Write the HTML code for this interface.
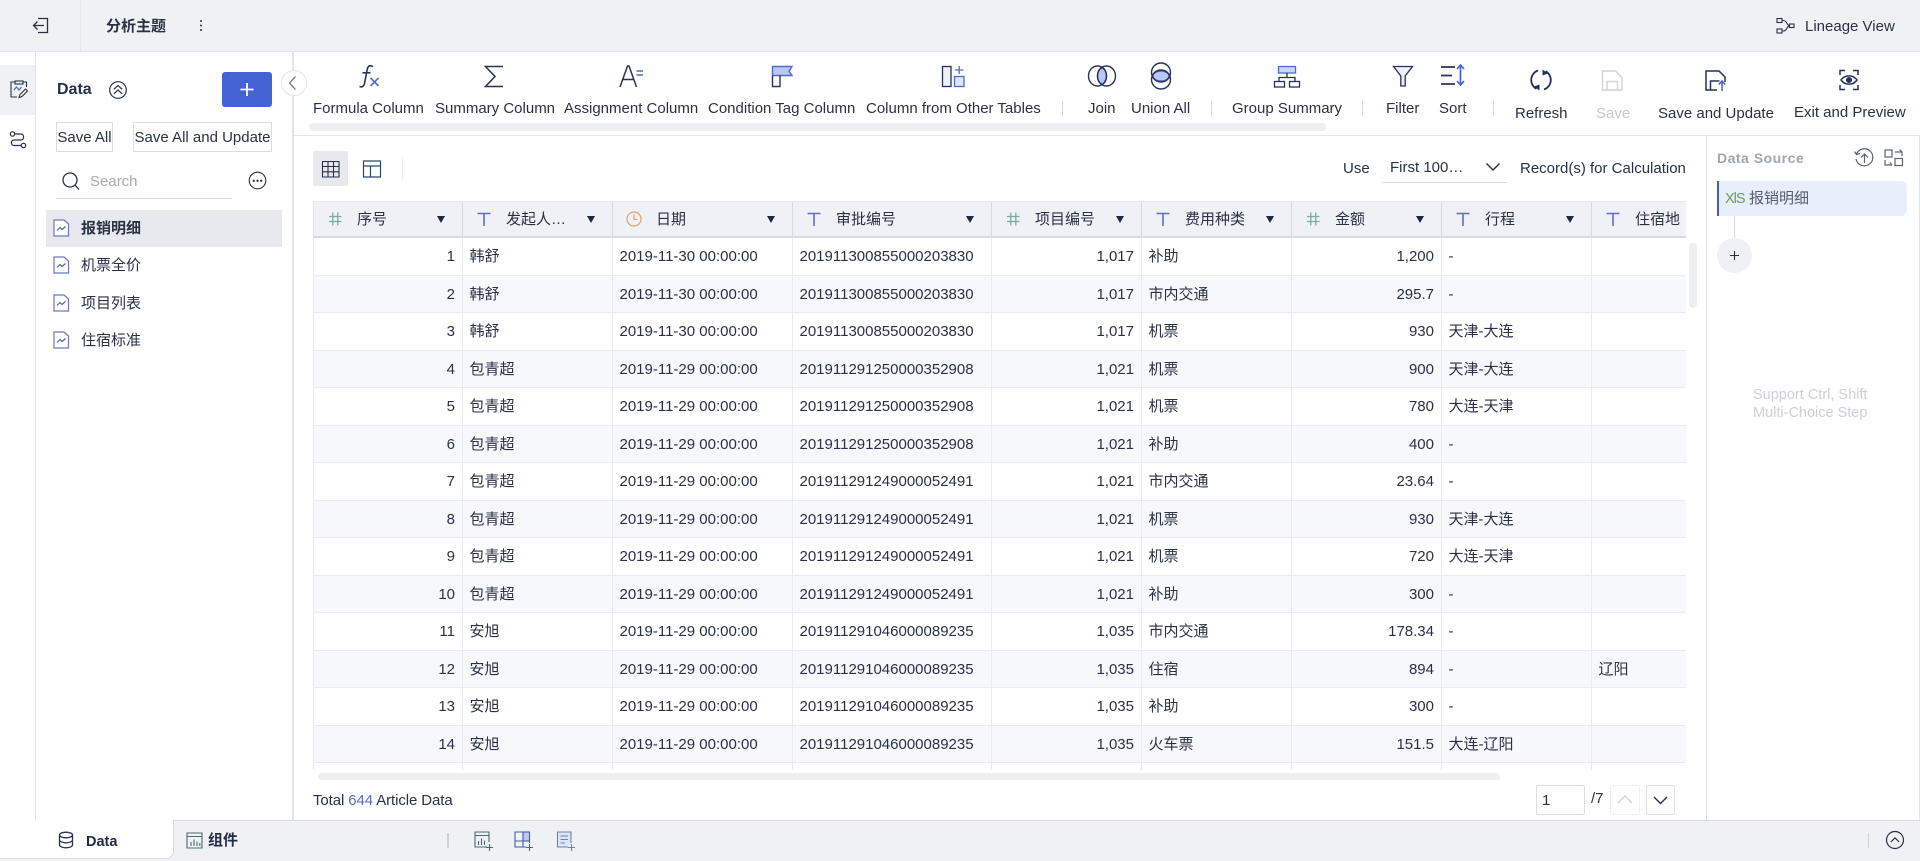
<!DOCTYPE html>
<html lang="zh">
<head>
<meta charset="utf-8">
<title>分析主题</title>
<style>
html,body{margin:0;padding:0;width:1920px;height:861px;overflow:hidden;background:#fff}
body{position:relative;font:15px/20px "Liberation Sans","Noto Sans CJK SC",sans-serif;color:#2a3144}
.a{position:absolute;white-space:nowrap}
svg{position:absolute;overflow:visible;fill:none}
.l{position:absolute;background:#e3e5ea}
.tl{position:absolute;top:99px;white-space:nowrap;line-height:20px}
.tb{position:absolute;left:313px;top:201px;width:1373px;height:569px;overflow:hidden}
.r{position:absolute;left:0;width:1373px;height:37.5px;display:flex;box-sizing:border-box;border-bottom:1.5px solid #e9ebf0}
.r.e{background:#f7f8fc}
.r>div{box-sizing:border-box;height:100%;border-right:1px solid #e9ebf0;padding:0 7px 0 6.5px;line-height:38px;white-space:nowrap;overflow:hidden;flex:none}
.r>div:nth-child(1){width:150px;border-left:1px solid #e9ebf0;text-align:right}
.r>div:nth-child(2){width:150px}
.r>div:nth-child(3){width:180px}
.r>div:nth-child(4){width:199px}
.r>div:nth-child(5){width:150px;text-align:right}
.r>div:nth-child(6){width:150px}
.r>div:nth-child(7){width:150px;text-align:right}
.r>div:nth-child(8){width:150px}
.r>div:nth-child(9){width:95px;border-right:0}
.h{position:absolute;left:0;top:0;width:1373px;height:37px;background:#eff1f7;border-top:1px solid #e6e8ee;border-bottom:2px solid #d7dae2;box-sizing:border-box}
.hc{position:absolute;top:0;height:100%;line-height:35px;border-right:1px solid #d7dae2;box-sizing:border-box}
.hc span{position:absolute;left:43px;top:0;white-space:nowrap}
.hc i{position:absolute;top:14px;right:17px;width:0;height:0;border-left:4.5px solid transparent;border-right:4.5px solid transparent;border-top:7px solid #1c2645}
.hc svg{left:13px;top:9px}
</style>
</head>
<body>

<!-- top bar -->
<div class="a" style="left:0;top:0;width:1920px;height:52px;background:#eff1f5;border-bottom:1px solid #e3e5ea;box-sizing:border-box"></div>
<div class="l" style="left:80px;top:0;width:1px;height:51px"></div>
<svg style="left:0;top:0" width="60" height="52" stroke="#2a3144" stroke-width="1.3"><path d="M38 18.5H47.5V32.5H38"/><path d="M44 25.5H33.5M37.5 21.5L33.5 25.5L37.5 29.5"/></svg>
<div class="a" style="left:106px;top:17px;font-weight:700;color:#2a3144">分析主题</div>
<svg style="left:0;top:0" width="220" height="52"><circle cx="201" cy="21" r="1" fill="#2a3144"/><circle cx="201" cy="25.5" r="1" fill="#2a3144"/><circle cx="201" cy="30" r="1" fill="#2a3144"/></svg>
<svg style="left:1770px;top:10px" width="34" height="30" stroke="#2a3144" stroke-width="1.1"><rect x="7" y="8.500" width="5" height="4"/><rect x="7" y="19" width="5" height="4"/><rect x="19.500" y="14" width="4.500" height="3.500"/><path d="M12 10.500H13.500C17 10.500 17 15.800 19.500 15.800C17 15.800 17 21 13.500 21H12"/></svg>
<div class="a" style="left:1805px;top:17px">Lineage View</div>

<!-- left rail -->
<div class="a" style="left:0;top:65px;width:35px;height:50px;background:#eff1f5"></div>
<div class="l" style="left:35px;top:52px;width:1px;height:768px"></div>
<svg style="left:8px;top:79px" width="22" height="22" stroke="#2a3144" stroke-width="1.1"><path d="M7 3H3V18H9M15 3H18.500V8"/><rect x="7" y="2" width="8" height="3"/><path d="M6 11L8.500 8L11 11L13.500 8" stroke="#4463c7"/><path d="M11 18.500L12 15.500L17.500 10L19.500 12L14 17.500Z"/></svg>
<svg style="left:8px;top:129px" width="22" height="22" stroke="#2a3144" stroke-width="1.2"><circle cx="4.500" cy="5" r="2.200"/><circle cx="15.500" cy="16.500" r="2.200"/><path d="M7 5H13C16.500 5 16.500 11 13 11H6C2.500 11 2.500 16.500 6 16.500H13"/></svg>

<!-- data panel -->
<div class="l" style="left:292px;top:52px;width:1.500px;height:768px"></div>
<div class="a" style="left:57px;top:80px;font-size:16px;font-weight:700;color:#24304f">Data</div>
<svg style="left:108px;top:80px" width="20" height="20" stroke="#2a3144" stroke-width="1.2"><circle cx="10" cy="10" r="8.300"/><path d="M5.800 9.300L10 5.500L14.200 9.300M5.800 13.800L10 10L14.200 13.800"/></svg>
<div class="a" style="left:222px;top:72px;width:50px;height:35px;background:#4462d2;border-radius:3px"></div>
<svg style="left:222px;top:72px" width="50" height="35" stroke="#fff" stroke-width="1.800"><path d="M25 11V24M18.500 17.500H31.500"/></svg>
<div class="a" style="left:281px;top:70px;width:26px;height:26px;border-radius:50%;background:#fff;border:1px solid #e3e5ea;box-sizing:border-box"></div>
<svg style="left:281px;top:70px" width="26" height="26" stroke="#666c78" stroke-width="1.200"><path d="M14.500 6.500L8.500 13L14.500 19.500"/></svg>
<div class="a" style="left:56px;top:122px;width:57px;height:30px;border:1px solid #dcdde1;box-sizing:border-box;text-align:center;line-height:30px;overflow:hidden">Save All</div>
<div class="a" style="left:133px;top:122px;width:139px;height:30px;border:1px solid #dcdde1;box-sizing:border-box;text-align:center;line-height:30px;overflow:hidden">Save All and Update</div>
<svg style="left:60px;top:170px" width="22" height="22" stroke="#2a3144" stroke-width="1.300"><circle cx="10" cy="10" r="7"/><path d="M15 15L19 19.500"/></svg>
<div class="a" style="left:90px;top:172px;color:#a8abb3">Search</div>
<div class="l" style="left:56px;top:198px;width:176px;height:1px;background:#dcdde3"></div>
<svg style="left:248px;top:171px" width="20" height="20" stroke="#2a3144" stroke-width="1.100"><circle cx="9.500" cy="9.500" r="8.300"/><circle cx="5.800" cy="9.800" r=".6" fill="#2a3144"/><circle cx="9.500" cy="9.800" r=".6" fill="#2a3144"/><circle cx="13.200" cy="9.800" r=".6" fill="#2a3144"/></svg>

<div class="a" style="left:46px;top:210px;width:236px;height:37px;background:#e8e9ee"></div>
<svg style="left:53px;top:219px" width="17" height="18" stroke="#6f75c4" stroke-width="1.200"><path d="M1 1H11L15.500 5V17H1Z" fill="#fff"/><path d="M4 11.500L7 8.500L9 10.500L12.500 7.500" stroke="#4d6a90"/></svg>
<div class="a" style="left:81px;top:219px;font-weight:700;color:#2a3144">报销明细</div>
<svg style="left:53px;top:256px" width="17" height="18" stroke="#6f75c4" stroke-width="1.200"><path d="M1 1H11L15.500 5V17H1Z"/><path d="M4 11.500L7 8.500L9 10.500L12.500 7.500" stroke="#4d6a90"/></svg>
<div class="a" style="left:81px;top:256px">机票全价</div>
<svg style="left:53px;top:294px" width="17" height="18" stroke="#6f75c4" stroke-width="1.200"><path d="M1 1H11L15.500 5V17H1Z"/><path d="M4 11.500L7 8.500L9 10.500L12.500 7.500" stroke="#4d6a90"/></svg>
<div class="a" style="left:81px;top:294px">项目列表</div>
<svg style="left:53px;top:331px" width="17" height="18" stroke="#6f75c4" stroke-width="1.200"><path d="M1 1H11L15.500 5V17H1Z"/><path d="M4 11.500L7 8.500L9 10.500L12.500 7.500" stroke="#4d6a90"/></svg>
<div class="a" style="left:81px;top:331px">住宿标准</div>
<svg style="left:285px;top:425px" width="14" height="21" fill="#555c68"><rect x="2" y="2.500" width="2" height="2"/><rect x="10" y="2.500" width="2" height="2"/><rect x="2" y="9" width="2" height="2"/><rect x="10" y="9" width="2" height="2"/><rect x="2" y="16" width="2" height="2"/><rect x="10" y="16" width="2" height="2"/></svg>

<!-- toolbar -->
<div class="l" style="left:293px;top:135px;width:1627px;height:1px"></div>
<div class="a" style="left:309px;top:123px;width:1017px;height:8px;background:#eeeff1;border-radius:4px"></div>

<svg style="left:357px;top:64px" width="24" height="24" stroke="#27315a" stroke-width="1.600"><path d="M16 2.600C12.800 .8 11 1.800 10.200 5.500L7.600 19C7 22.500 5 23.400 2.500 22.500"/><path d="M5.500 8.800H13.500"/><path d="M13.500 14L21.500 22M21.500 14L13.500 22" stroke="#4f6cc9"/></svg>
<svg style="left:482px;top:64px" width="24" height="24" stroke="#27315a" stroke-width="1.500"><path d="M21 2.500H3.500L13 12.500L3.500 22.500H21"/></svg>
<svg style="left:619px;top:64px" width="26" height="24" stroke="#27315a" stroke-width="1.500"><path d="M1 23L8.500 2H10L17.500 23M4 15.500H14.500"/><path d="M17.500 7H24M17.500 11H24" stroke="#4f6cc9"/></svg>
<svg style="left:770px;top:64px" width="24" height="24" stroke-width="1.400"><path d="M2.500 2.500H22L19 7.200L22 11.500H2.500Z" fill="#b9c9f6" stroke="#4f6cc9"/><path d="M2.500 11.500V22.500H10V11.500" stroke="#27315a"/></svg>
<svg style="left:941px;top:64px" width="26" height="24" stroke-width="1.300"><rect x="1.500" y="2.500" width="8.500" height="20" fill="#eef2fd" stroke="#27315a"/><rect x="13.500" y="12.500" width="9.500" height="10" fill="#dfe6fa" stroke="#4f6cc9"/><path d="M18.200 2V10M14 6H22.500" stroke="#4f6cc9"/></svg>
<svg style="left:1088px;top:62px" width="28" height="28" stroke="#27315a" stroke-width="1.400"><ellipse cx="14" cy="14" rx="4.500" ry="8" fill="#b9c9f6" stroke="#4f6cc9"/><ellipse cx="9.500" cy="14" rx="9" ry="10"/><ellipse cx="18.500" cy="14" rx="9" ry="10"/></svg>
<svg style="left:1147px;top:62px" width="28" height="28" stroke="#27315a" stroke-width="1.400"><ellipse cx="14" cy="14" rx="8" ry="5" fill="#b9c9f6" stroke="#4f6cc9"/><circle cx="14" cy="10.500" r="9.500"/><circle cx="14" cy="17.500" r="9.500"/></svg>
<svg style="left:1273px;top:64px" width="28" height="24" stroke="#4f6cc9" stroke-width="1.300"><rect x="5.500" y="2.500" width="17" height="6.500" fill="#c8d5f8"/><path d="M14 9V13.500M6 18V13.500H22V18" stroke="#27315a"/><rect x="1.500" y="17.500" width="10" height="5.500" stroke="#27315a"/><rect x="16.500" y="17.500" width="10" height="5.500" stroke="#27315a"/></svg>
<svg style="left:1391px;top:64px" width="24" height="24" stroke="#27315a" stroke-width="1.300"><path d="M2.500 2.500H21.500L14.200 12V22H9.800V12Z" fill="#eaeffc"/></svg>
<svg style="left:1439px;top:62px" width="30" height="26" stroke-width="1.700"><path d="M2 5H16M2 13.500H13M2 22H16" stroke="#27315a"/><path d="M21.500 3V23" stroke="#4463c7"/><path d="M18 7L21.500 3L25 7M18 19L21.500 23L25 19" stroke="#4463c7"/></svg>

<div class="tl" style="left:313px">Formula Column</div>
<div class="tl" style="left:435px">Summary Column</div>
<div class="tl" style="left:564px">Assignment Column</div>
<div class="tl" style="left:708px">Condition Tag Column</div>
<div class="tl" style="left:866px">Column from Other Tables</div>
<div class="l" style="left:1062px;top:101px;width:1px;height:15px;background:#d5d7dc"></div>
<div class="tl" style="left:1088px">Join</div>
<div class="tl" style="left:1131px">Union All</div>
<div class="l" style="left:1211px;top:101px;width:1px;height:15px;background:#d5d7dc"></div>
<div class="tl" style="left:1232px">Group Summary</div>
<div class="l" style="left:1362px;top:101px;width:1px;height:15px;background:#d5d7dc"></div>
<div class="tl" style="left:1386px">Filter</div>
<div class="tl" style="left:1439px">Sort</div>
<div class="l" style="left:1493px;top:101px;width:1px;height:15px;background:#d5d7dc"></div>

<svg style="left:1529px;top:68px" width="24" height="24" stroke="#27315a" stroke-width="1.800"><path d="M9 2.500A10 10 0 0 0 7.500 20.800"/><path d="M15 21.500A10 10 0 0 0 16.500 3.200"/><path d="M10.500 22.500L5 18.500L10.500 16.500Z" fill="#27315a" stroke="none"/><path d="M13.500 1.500L19 5.500L13.500 7.500Z" fill="#27315a" stroke="none"/></svg>
<div class="tl" style="left:1515px;top:104px">Refresh</div>
<svg style="left:1600px;top:68px" width="24" height="24" stroke="#d3d4d8" stroke-width="1.500"><path d="M2.500 3H15.500L22 9.500V22H2.500Z"/><rect x="7" y="13.500" width="10.500" height="8.500"/></svg>
<div class="tl" style="left:1596px;top:104px;color:#c6c8cc">Save</div>
<svg style="left:1703px;top:68px" width="26" height="24" stroke="#27315a" stroke-width="1.500"><path d="M14 22H3V3H16L22 9V14"/><path d="M7.500 22V13H16.500"/><path d="M19 23V13.500M15.800 16.500L19 13L22.200 16.500" stroke="#4463c7"/></svg>
<div class="tl" style="left:1658px;top:104px">Save and Update</div>
<svg style="left:1837px;top:68px" width="24" height="24" stroke="#27315a" stroke-width="1.500"><path d="M8 2.500H3V7M16 2.500H21V7M8 21.500H3V17M16 21.500H21V17"/><path d="M4 12C8 6.500 16 6.500 20 12C16 17.500 8 17.500 4 12Z"/><circle cx="12" cy="12" r="2.300" fill="#27315a"/></svg>
<div class="tl" style="left:1794px;top:103px">Exit and Preview</div>

<!-- table controls -->
<div class="a" style="left:313px;top:151px;width:35px;height:35px;background:#e8e9ee;border-radius:2px"></div>
<svg style="left:321px;top:159px" width="20" height="20" stroke="#2a3144" stroke-width="1.100"><path d="M1.500 2.500H18V18H1.500ZM1.500 7.500H18M1.500 12.800H18M7 2.500V18M12.500 2.500V18"/></svg>
<svg style="left:362px;top:159px" width="20" height="20" stroke="#2a4a6a" stroke-width="1.200"><path d="M1.500 2H18.500V18H1.500ZM1.500 7H18.500M8.500 7V18"/></svg>
<div class="l" style="left:402px;top:156px;width:1px;height:25px;background:#eceef1"></div>
<div class="a" style="left:1343px;top:159px">Use</div>
<div class="a" style="left:1390px;top:158px">First 100…</div>
<svg style="left:1484px;top:160px" width="18" height="14" stroke="#2a3144" stroke-width="1.400"><path d="M2.500 3.500L9 10L15.500 3.500"/></svg>
<div class="l" style="left:1382px;top:182px;width:125px;height:1px;background:#dcdde3"></div>
<div class="a" style="left:1520px;top:159px">Record(s) for Calculation</div>

<!-- table -->
<div class="tb">
<div class="r" style="top:37px"><div>1</div><div>韩舒</div><div>2019-11-30 00:00:00</div><div>201911300855000203830</div><div>1,017</div><div>补助</div><div>1,200</div><div>-</div><div></div></div>
<div class="r e" style="top:74.5px"><div>2</div><div>韩舒</div><div>2019-11-30 00:00:00</div><div>201911300855000203830</div><div>1,017</div><div>市内交通</div><div>295.7</div><div>-</div><div></div></div>
<div class="r" style="top:112px"><div>3</div><div>韩舒</div><div>2019-11-30 00:00:00</div><div>201911300855000203830</div><div>1,017</div><div>机票</div><div>930</div><div>天津-大连</div><div></div></div>
<div class="r e" style="top:149.5px"><div>4</div><div>包青超</div><div>2019-11-29 00:00:00</div><div>201911291250000352908</div><div>1,021</div><div>机票</div><div>900</div><div>天津-大连</div><div></div></div>
<div class="r" style="top:187px"><div>5</div><div>包青超</div><div>2019-11-29 00:00:00</div><div>201911291250000352908</div><div>1,021</div><div>机票</div><div>780</div><div>大连-天津</div><div></div></div>
<div class="r e" style="top:224.5px"><div>6</div><div>包青超</div><div>2019-11-29 00:00:00</div><div>201911291250000352908</div><div>1,021</div><div>补助</div><div>400</div><div>-</div><div></div></div>
<div class="r" style="top:262px"><div>7</div><div>包青超</div><div>2019-11-29 00:00:00</div><div>201911291249000052491</div><div>1,021</div><div>市内交通</div><div>23.64</div><div>-</div><div></div></div>
<div class="r e" style="top:299.5px"><div>8</div><div>包青超</div><div>2019-11-29 00:00:00</div><div>201911291249000052491</div><div>1,021</div><div>机票</div><div>930</div><div>天津-大连</div><div></div></div>
<div class="r" style="top:337px"><div>9</div><div>包青超</div><div>2019-11-29 00:00:00</div><div>201911291249000052491</div><div>1,021</div><div>机票</div><div>720</div><div>大连-天津</div><div></div></div>
<div class="r e" style="top:374.5px"><div>10</div><div>包青超</div><div>2019-11-29 00:00:00</div><div>201911291249000052491</div><div>1,021</div><div>补助</div><div>300</div><div>-</div><div></div></div>
<div class="r" style="top:412px"><div>11</div><div>安旭</div><div>2019-11-29 00:00:00</div><div>201911291046000089235</div><div>1,035</div><div>市内交通</div><div>178.34</div><div>-</div><div></div></div>
<div class="r e" style="top:449.5px"><div>12</div><div>安旭</div><div>2019-11-29 00:00:00</div><div>201911291046000089235</div><div>1,035</div><div>住宿</div><div>894</div><div>-</div><div>辽阳</div></div>
<div class="r" style="top:487px"><div>13</div><div>安旭</div><div>2019-11-29 00:00:00</div><div>201911291046000089235</div><div>1,035</div><div>补助</div><div>300</div><div>-</div><div></div></div>
<div class="r e" style="top:524.5px"><div>14</div><div>安旭</div><div>2019-11-29 00:00:00</div><div>201911291046000089235</div><div>1,035</div><div>火车票</div><div>151.5</div><div>大连-辽阳</div><div></div></div>
<div class="r" style="top:562px"><div></div><div></div><div></div><div></div><div></div><div></div><div></div><div></div><div></div></div>

<div class="h">
<div class="hc" style="left:0;width:150px;border-left:1px solid #e0e2e9"><svg width="16" height="16" stroke="#7cab9f" stroke-width="1.300"><path d="M2 5.500H14.500M2 10.500H14.500M5.800 1.500V14.500M10.800 1.500V14.500"/></svg><span>序号</span><i></i></div>
<div class="hc" style="left:150px;width:150px"><svg width="16" height="16" stroke="#5f6fc4" stroke-width="1.600"><path d="M1.500 2.500H14.500M8 2.500V15"/></svg><span>发起人…</span><i></i></div>
<div class="hc" style="left:300px;width:180px"><svg width="16" height="16" stroke="#e0a676" stroke-width="1.300"><circle cx="8" cy="8" r="7"/><path d="M8 3.500V8.500H11.500"/></svg><span>日期</span><i></i></div>
<div class="hc" style="left:480px;width:199px"><svg width="16" height="16" stroke="#5f6fc4" stroke-width="1.600"><path d="M1.500 2.500H14.500M8 2.500V15"/></svg><span>审批编号</span><i></i></div>
<div class="hc" style="left:679px;width:150px"><svg width="16" height="16" stroke="#7cab9f" stroke-width="1.300"><path d="M2 5.500H14.500M2 10.500H14.500M5.800 1.500V14.500M10.800 1.500V14.500"/></svg><span>项目编号</span><i></i></div>
<div class="hc" style="left:829px;width:150px"><svg width="16" height="16" stroke="#5f6fc4" stroke-width="1.600"><path d="M1.500 2.500H14.500M8 2.500V15"/></svg><span>费用种类</span><i></i></div>
<div class="hc" style="left:979px;width:150px"><svg width="16" height="16" stroke="#7cab9f" stroke-width="1.300"><path d="M2 5.500H14.500M2 10.500H14.500M5.800 1.500V14.500M10.800 1.500V14.500"/></svg><span>金额</span><i></i></div>
<div class="hc" style="left:1129px;width:150px"><svg width="16" height="16" stroke="#5f6fc4" stroke-width="1.600"><path d="M1.500 2.500H14.500M8 2.500V15"/></svg><span>行程</span><i></i></div>
<div class="hc" style="left:1279px;width:95px;border-right:0"><svg width="16" height="16" stroke="#5f6fc4" stroke-width="1.600"><path d="M1.500 2.500H14.500M8 2.500V15"/></svg><span>住宿地</span></div>
</div>
</div>

<!-- scrollbars -->
<div class="a" style="left:1689px;top:243px;width:8px;height:65px;background:#eeeff1;border-radius:4px"></div>
<div class="a" style="left:318px;top:773px;width:1182px;height:7px;background:#eeeff1;border-radius:4px"></div>

<!-- pagination -->
<div class="a" style="left:313px;top:791px;letter-spacing:-.1px">Total <span style="color:#5b6bbf">644</span> Article Data</div>
<div class="a" style="left:1536px;top:785px;width:49px;height:30px;border:1px solid #dfe0e3;border-radius:2px;box-sizing:border-box;line-height:29px;padding-left:5px">1</div>
<div class="a" style="left:1591px;top:789px">/7</div>
<div class="a" style="left:1610px;top:785px;width:30px;height:30px;border:1px solid #eff0f2;border-radius:2px;box-sizing:border-box"></div>
<svg style="left:1610px;top:785px" width="30" height="30" stroke="#d3d5d9" stroke-width="1.400"><path d="M8 18L15 11L22 18"/></svg>
<div class="a" style="left:1646px;top:785px;width:29px;height:30px;border:1px solid #dfe0e3;border-radius:2px;box-sizing:border-box"></div>
<svg style="left:1646px;top:785px" width="29" height="30" stroke="#2a3144" stroke-width="1.400"><path d="M8 12L14.500 18.500L21 12"/></svg>

<!-- right panel -->
<div class="l" style="left:1706px;top:136px;width:1px;height:684px;background:#e1e2e6"></div>
<div class="l" style="left:1919px;top:136px;width:1px;height:684px"></div>
<div class="a" style="left:1717px;top:148px;font-size:14px;font-weight:700;color:#a2a6b1;letter-spacing:.5px">Data Source</div>
<svg style="left:1853px;top:147px" width="22" height="22" stroke="#5b6472" stroke-width="1.200"><path d="M3.500 7A8.500 8.500 0 1 1 3 12"/><path d="M1.500 4.500L3.500 7.500L7 6.500"/><path d="M11.500 16V7M8 10.500L11.500 7L15 10.500"/></svg>
<svg style="left:1884px;top:148px" width="20" height="20" stroke="#5b6472" stroke-width="1.200"><rect x="1" y="2" width="7" height="7"/><rect x="11" y="10.500" width="7.500" height="7"/><path d="M11 4H18V8M15.500 1.500L18 4M1 12V17H8M6 14.500L8 17"/></svg>

<div class="a" style="left:1717px;top:181px;width:190px;height:35px;background:#e8effc;border-left:2px solid #4b5ea8;border-radius:0 6px 6px 0;box-sizing:border-box"></div>
<div class="a" style="left:1725px;top:189px;font-size:14.500px;color:#6f9a5f;letter-spacing:-1px">XlS</div>
<div class="a" style="left:1749px;top:189px;color:#575e69">报销明细</div>
<div class="l" style="left:1734px;top:216px;width:1px;height:22px;background:#d9dbe0"></div>
<div class="a" style="left:1717px;top:238px;width:35px;height:35px;border-radius:50%;background:#eff1f5"></div>
<svg style="left:1717px;top:238px" width="35" height="35" stroke="#2a3144" stroke-width="1.100"><path d="M17.500 13V22M13 17.500H22"/></svg>
<div class="a" style="left:1753px;top:387px;font-size:14.500px;line-height:17.500px;color:#cfd0d3">Support Ctrl, Shift<br>Multi-Choice Step</div>

<!-- bottom bar -->
<div class="a" style="left:0;top:820px;width:1920px;height:41px;background:#eff1f5;border-top:1.500px solid #d8dade;box-sizing:border-box"></div>
<div class="a" style="left:0;top:820px;width:174px;height:39px;background:#fff;border-right:1px solid #d8dade;border-bottom:1px solid #d8dade;border-radius:0 0 8px 0;box-sizing:border-box"></div>
<svg style="left:57px;top:831px" width="18" height="18" stroke="#2a3144" stroke-width="1.300"><ellipse cx="9" cy="4" rx="6.500" ry="2.800"/><path d="M2.500 4V14C2.500 15.500 5.500 16.800 9 16.800C12.500 16.800 15.500 15.500 15.500 14V4M2.500 9C2.500 10.500 5.500 11.800 9 11.800C12.500 11.800 15.500 10.500 15.500 9"/></svg>
<div class="a" style="left:86px;top:832px;font-weight:700;font-size:14.500px;color:#222b44">Data</div>
<svg style="left:186px;top:832px" width="17" height="17" stroke="#4d6a72" stroke-width="1.100"><path d="M1 1H16V16H1ZM1 4.500H16"/><path d="M5 14V10M8 14V7.500M11 14V9.500M13.800 14V11"/></svg>
<div class="a" style="left:208px;top:831px;font-weight:700;color:#222b44">组件</div>
<div class="l" style="left:447px;top:833px;width:1.500px;height:15px;background:#cfd1d6"></div>
<svg style="left:473px;top:830px" width="22" height="22" stroke="#4d6a72" stroke-width="1.100"><path d="M14 17H2V2H16V12M2 5.500H16M5.500 15V11M8.500 15V8.500M11.500 15V10.500"/><path d="M16.500 14V21M13 17.500H20"/></svg>
<svg style="left:513px;top:830px" width="22" height="22" stroke="#4a5da8" stroke-width="1.100"><path d="M13 17H2V2H16.500V13M10 2V17M2 11H16.500"/><rect x="10" y="2" width="6.500" height="9" fill="#b9c9f6" stroke="#4a5da8"/><path d="M16.500 14V21M13 17.500H20"/></svg>
<svg style="left:555px;top:830px" width="22" height="22" stroke="#6f80b5" stroke-width="1.100"><path d="M13 17H2.500V2H16V13" fill="#dde5f8"/><path d="M5.500 6H13M5.500 9.500H13M5.500 13H10"/><path d="M16.500 14V21M13 17.500H20"/></svg>
<div class="l" style="left:1868px;top:833px;width:1px;height:15px;background:#cfd1d6"></div>
<svg style="left:1885px;top:830px" width="20" height="20" stroke="#2a3144" stroke-width="1.200"><circle cx="10" cy="10" r="8.500"/><path d="M5.800 12L10 7.800L14.200 12"/></svg>

</body>
</html>
